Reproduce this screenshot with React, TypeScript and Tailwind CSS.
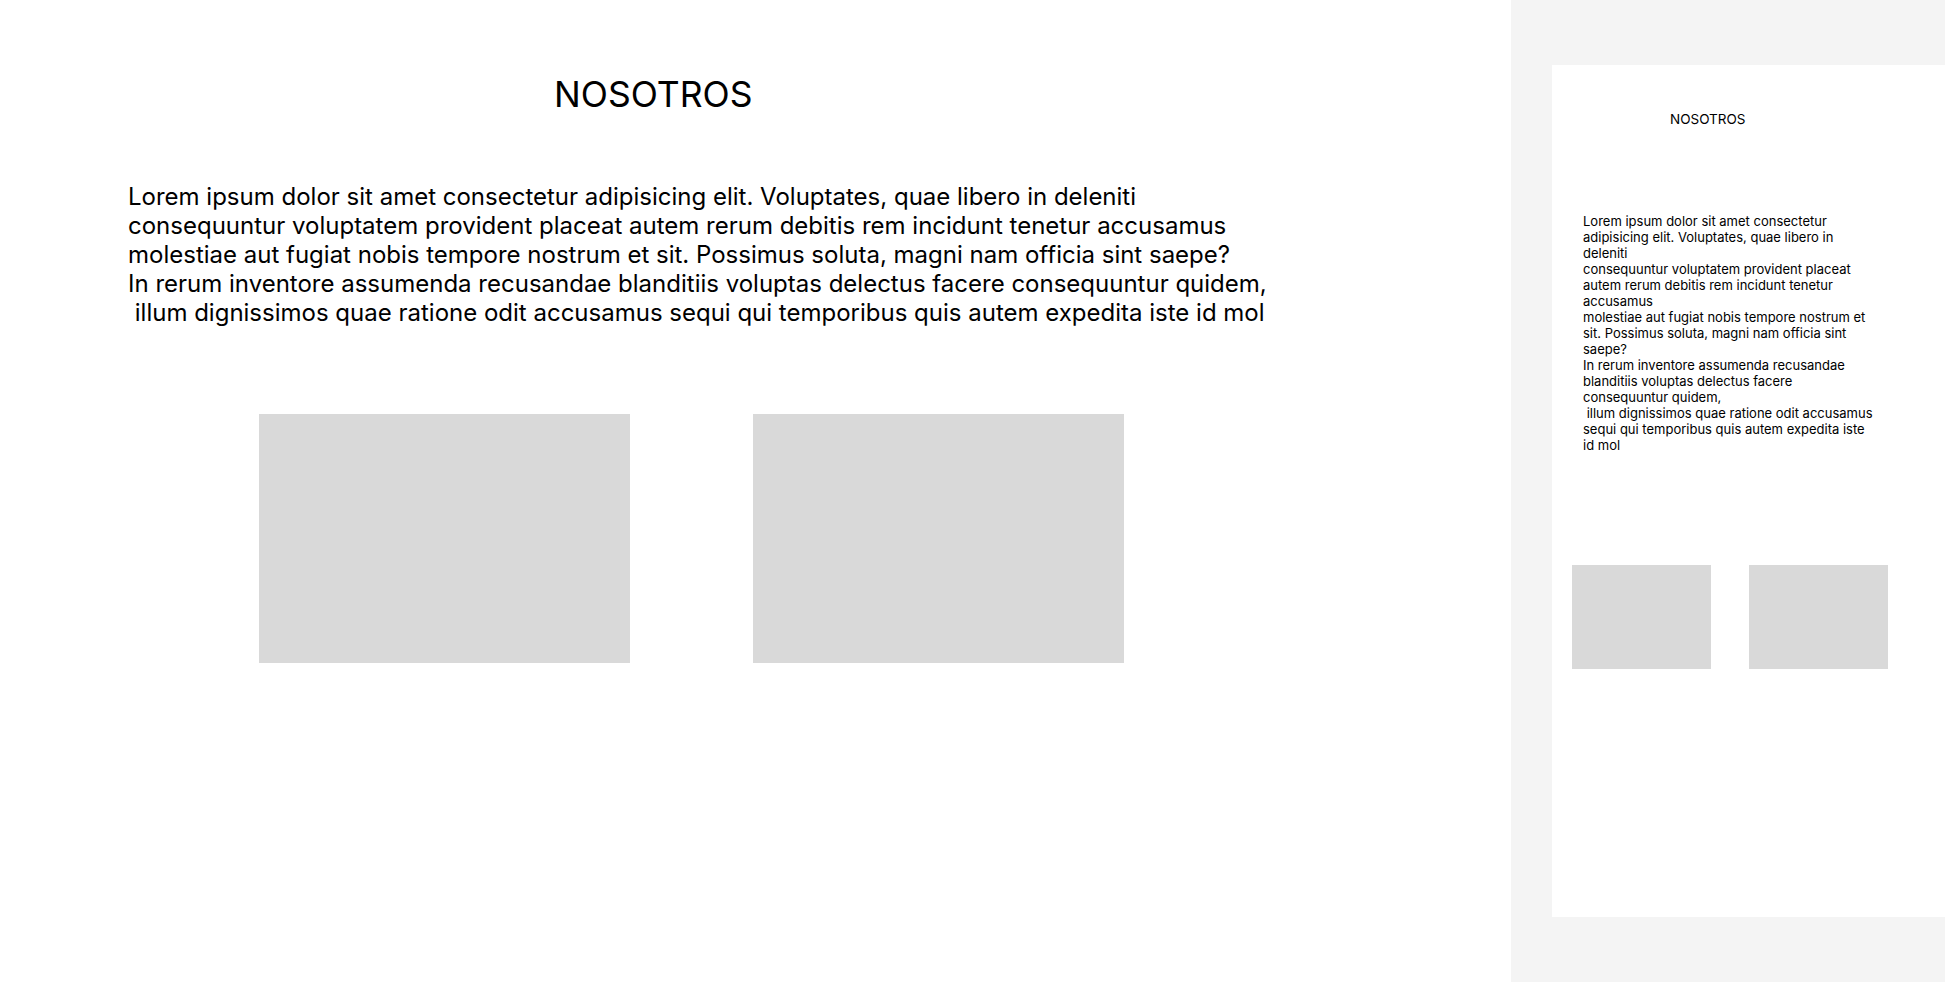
import React from "react";

const body = `Lorem ipsum dolor sit amet consectetur adipisicing elit. Voluptates, quae libero in deleniti
consequuntur voluptatem provident placeat autem rerum debitis rem incidunt tenetur accusamus
molestiae aut fugiat nobis tempore nostrum et sit. Possimus soluta, magni nam officia sint saepe?
In rerum inventore assumenda recusandae blanditiis voluptas delectus facere consequuntur quidem,
 illum dignissimos quae ratione odit accusamus sequi qui temporibus quis autem expedita iste id mol`;

export default function App() {
  return (
    <div className="flex w-[1945px] h-[982px] overflow-hidden bg-white text-black font-['Inter',sans-serif]">
      <main className="w-[1511px] shrink-0 bg-white">
        <h1 className="pt-[73px] pl-[554px] text-[35.5px] leading-[43px] font-normal">NOSOTROS</h1>
        <p className="mt-[66px] pl-[128px] text-[24px] leading-[29px] whitespace-pre-wrap">{body}</p>
        <div className="mt-[87px] pl-[259px] flex gap-[123px]">
          <div className="w-[371px] h-[249px] bg-[#d9d9d9]" />
          <div className="w-[371px] h-[249px] bg-[#d9d9d9]" />
        </div>
      </main>
      <aside className="flex-1 bg-[#f4f4f4] pl-[41px] pt-[65px]">
        <div className="w-[400px] h-[852px] bg-white">
          <h2 className="pt-[46px] pl-[118px] text-[13.5px] leading-[16px] font-normal">NOSOTROS</h2>
          <p className="mt-[86px] ml-[31px] w-[291px] text-[13px] leading-[16px] whitespace-pre-wrap">{body}</p>
          <div className="mt-[112px] pl-[20px] flex gap-[38px]">
            <div className="w-[139px] h-[104px] bg-[#d9d9d9]" />
            <div className="w-[139px] h-[104px] bg-[#d9d9d9]" />
          </div>
        </div>
      </aside>
    </div>
  );
}
